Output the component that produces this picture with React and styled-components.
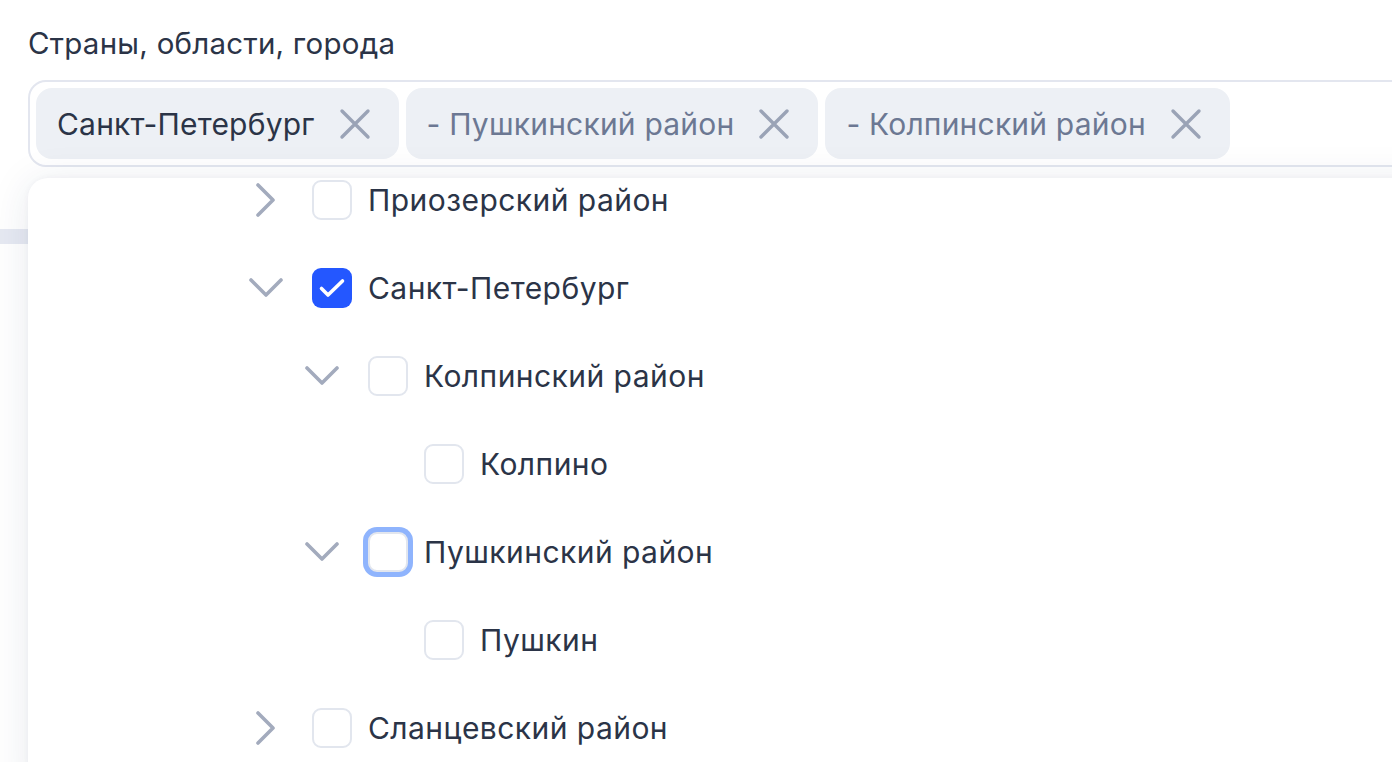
import React from "react";
import styled, { createGlobalStyle } from "styled-components";

const Global = createGlobalStyle`
  html, body { margin: 0; padding: 0; background: #ffffff; }
  body { font-family: Inter, "Noto Sans", Arial, sans-serif; overflow: hidden; }
  * { box-sizing: border-box; }
`;

const Page = styled.div`
  width: 1392px;
  height: 762px;
  overflow: hidden;
  padding: 25px 0 0 28px;
  position: relative;
`;

const Label = styled.div`
  font-size: 29.5px;
  line-height: 37px;
  color: #2b3447;
  margin-bottom: 18px;
  letter-spacing: 0.25px;
`;

const Field = styled.div`
  position: relative;
`;

const InputBox = styled.div`
  width: 1400px;
  height: 87px;
  border: 2px solid #e3e6ef;
  border-radius: 18px;
  padding: 6px;
  display: flex;
  gap: 7px;
  background: #ffffff;
`;

const Chip = styled.div`
  height: 71px;
  border-radius: 16px;
  background: #edf0f5;
  display: flex;
  align-items: center;
  padding: 0 28px 0 21px;
  gap: 24px;
  font-size: 30px;
  letter-spacing: 0.2px;
  color: ${(p) => (p.$muted ? "#6c7893" : "#2b3447")};
  white-space: nowrap;
`;

const Band = styled.div`
  margin: 62px 0 0 -28px;
  width: 600px;
  height: 15px;
  background: #e6e9f2;
`;

const Dropdown = styled.div`
  position: absolute;
  top: 98px;
  left: 0;
  width: 1420px;
  height: 620px;
  background: #ffffff;
  border-radius: 20px;
  box-shadow: 0 4px 40px rgba(30, 45, 90, 0.1), 0 0 6px rgba(30, 45, 90, 0.04);
  overflow: hidden;
`;

const List = styled.div`
  margin-top: -22px;
  padding-left: 218px;
  display: flex;
  flex-direction: column;
`;

const Row = styled.div`
  height: 88px;
  display: flex;
  align-items: center;
  padding-left: ${(p) => p.$level * 56}px;
`;

const Toggle = styled.div`
  width: 40px;
  height: 40px;
  margin-right: 26px;
  display: flex;
  align-items: center;
  justify-content: center;
  color: #a3abbd;
  visibility: ${(p) => (p.$hidden ? "hidden" : "visible")};
`;

const Box = styled.div`
  width: 40px;
  height: 40px;
  border-radius: 9px;
  flex: none;
  display: flex;
  align-items: center;
  justify-content: center;
  border: ${(p) => (p.$checked ? "none" : "2px solid #e2e6ee")};
  background: ${(p) => (p.$checked ? "#2457ff" : "#ffffff")};
  box-shadow: ${(p) => (p.$focus ? "0 0 0 5px #8fb4fd" : "none")};
`;

const Text = styled.span`
  margin-left: 16px;
  font-size: 30px;
  letter-spacing: 0.45px;
  color: #2b3447;
  white-space: nowrap;
`;

const XIcon = () => (
  <svg width="32" height="32" viewBox="0 0 32 32" fill="none">
    <path d="M3 3 L29 29 M29 3 L3 29" stroke="#9aa3b6" strokeWidth="3.4" strokeLinecap="round" />
  </svg>
);

const Chevron = ({ open }) => (
  <svg width="34" height="34" viewBox="0 0 34 34" fill="none">
    {open ? (
      <path d="M2 9 L17 24 L32 9" stroke="currentColor" strokeWidth="3.6" strokeLinecap="round" strokeLinejoin="round" />
    ) : (
      <path d="M9 2 L24 17 L9 32" stroke="currentColor" strokeWidth="3.6" strokeLinecap="round" strokeLinejoin="round" />
    )}
  </svg>
);

const Check = () => (
  <svg width="30" height="30" viewBox="0 0 30 30" fill="none">
    <path d="M4.5 15.5 L11 22 L25.5 8" stroke="#ffffff" strokeWidth="3.6" strokeLinecap="round" strokeLinejoin="round" />
  </svg>
);

const rows = [
  { level: 0, toggle: "closed", label: "Приозерский район" },
  { level: 0, toggle: "open", label: "Санкт-Петербург", checked: true },
  { level: 1, toggle: "open", label: "Колпинский район" },
  { level: 1, toggle: null, label: "Колпино", leaf: true },
  { level: 1, toggle: "open", label: "Пушкинский район", focus: true },
  { level: 1, toggle: null, label: "Пушкин", leaf: true },
  { level: 0, toggle: "closed", label: "Сланцевский район" },
];

const chips = [
  { label: "Санкт-Петербург" },
  { label: "- Пушкинский район", muted: true },
  { label: "- Колпинский район", muted: true },
];

export default function App() {
  return (
    <Page>
      <Global />
      <Label>Страны, области, города</Label>
      <Field>
        <InputBox>
          {chips.map((c) => (
            <Chip key={c.label} $muted={c.muted}>
              {c.label}
              <XIcon />
            </Chip>
          ))}
        </InputBox>
        <Band />
        <Dropdown>
          <List>
            {rows.map((r) => (
              <Row key={r.label} $level={r.leaf ? r.level + 1 : r.level}>
                <Toggle $hidden={r.leaf}>
                  {r.toggle && <Chevron open={r.toggle === "open"} />}
                </Toggle>
                <Box $checked={r.checked} $focus={r.focus}>
                  {r.checked && <Check />}
                </Box>
                <Text>{r.label}</Text>
              </Row>
            ))}
          </List>
        </Dropdown>
      </Field>
    </Page>
  );
}
